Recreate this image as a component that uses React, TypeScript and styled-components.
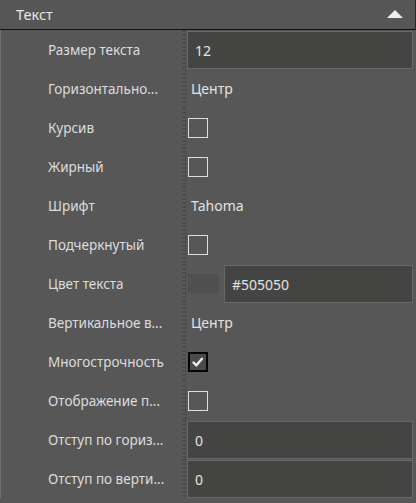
import React from "react";
import styled, { createGlobalStyle } from "styled-components";

const Global = createGlobalStyle`
  html, body { margin: 0; padding: 0; background: #575757; }
  body { font-family: "Noto Sans", "Segoe UI", sans-serif; }
`;

const Panel = styled.div`
  width: 416px;
  height: 503px;
  background: #575757;
  display: flex;
  flex-direction: column;
  overflow: hidden;
`;

const Header = styled.div`
  height: 30px;
  flex: none;
  display: flex;
  align-items: center;
  justify-content: space-between;
  padding: 0 12px 1px 16px;
  box-sizing: border-box;
  border-bottom: 1px solid #111;
  border-right: 1px solid #2a2a2a;
  background: #565656;
  color: #e6e6e6;
  font-size: 14.5px;
`;

const Body = styled.div`
  border-left: 1px solid #6e6e6e;
  display: flex;
  flex-direction: column;
  height: 468px;
  box-sizing: border-box;
`;

const Row = styled.div`
  height: 39px;
  display: grid;
  grid-template-columns: 181px 4px 1fr;
  align-items: stretch;
`;

const Label = styled.div`
  display: flex;
  align-items: center;
  padding: 0 4px 0 47px;
  color: #dcdcdc;
  font-size: 13.5px;
  white-space: nowrap;
  min-width: 0;
`;

const Splitter = styled.div`
  background:
    repeating-linear-gradient(
      to bottom,
      #4a4a4a 0px,
      #4a4a4a 2px,
      #606060 2px,
      #606060 4px
    );
  border-left: 1px solid #505050;
  border-right: 1px solid #4c4c4c;
  width: 2px;
`;

const Value = styled.div<{ $pad?: number }>`
  display: flex;
  align-items: center;
  gap: 5px;
  padding-left: ${(p) => p.$pad ?? 1}px;
  padding-right: 3px;
  color: #e2e2e2;
  font-size: 14px;
  min-width: 0;
`;

const Input = styled.div`
  flex: 1;
  align-self: flex-start;
  margin-top: 1px;
  height: 38px;
  box-sizing: border-box;
  background: #444442;
  border: 1px solid #686868;
  display: flex;
  align-items: center;
  padding-left: 7px;
  color: #e4e4e4;
  font-size: 14px;
`;

const Check = styled.div<{ $on?: boolean }>`
  width: 20px;
  height: 20px;
  box-sizing: border-box;
  border: ${(p) => (p.$on ? "2px solid #050505" : "1px solid #dedede")};
  background: ${(p) => (p.$on ? "#4a4a4a" : "transparent")};
  display: flex;
  align-items: center;
  justify-content: center;
`;

const Swatch = styled.div<{ $color: string }>`
  width: 31px;
  height: 19px;
  flex: none;
  background: ${(p) => p.$color};
`;

const Tick = () => (
  <svg width="14" height="12" viewBox="0 0 14 12">
    <path
      d="M2.5 6.5 L5.3 9.4 L11 2.8"
      fill="none"
      stroke="#ececec"
      strokeWidth="2.4"
      strokeLinecap="round"
      strokeLinejoin="round"
    />
  </svg>
);

const Caret = () => (
  <svg width="16" height="8" viewBox="0 0 16 8">
    <path d="M8 0 L16 8 L0 8 Z" fill="#ededed" />
  </svg>
);

type Field =
  | { label: string; kind: "input"; value: string }
  | { label: string; kind: "text"; value: string }
  | { label: string; kind: "check"; on?: boolean }
  | { label: string; kind: "color"; value: string };

const fields: Field[] = [
  { label: "Размер текста", kind: "input", value: "12" },
  { label: "Горизонтально...", kind: "text", value: "Центр" },
  { label: "Курсив", kind: "check" },
  { label: "Жирный", kind: "check" },
  { label: "Шрифт", kind: "text", value: "Tahoma" },
  { label: "Подчеркнутый", kind: "check" },
  { label: "Цвет текста", kind: "color", value: "#505050" },
  { label: "Вертикальное в...", kind: "text", value: "Центр" },
  { label: "Многострочность", kind: "check", on: true },
  { label: "Отображение п...", kind: "check" },
  { label: "Отступ по гориз...", kind: "input", value: "0" },
  { label: "Отступ по верти...", kind: "input", value: "0" },
];

function renderValue(f: Field) {
  switch (f.kind) {
    case "input":
      return (
        <Value>
          <Input>{f.value}</Input>
        </Value>
      );
    case "text":
      return <Value $pad={5}>{f.value}</Value>;
    case "check":
      return (
        <Value $pad={2}>
          <Check $on={f.on}>{f.on && <Tick />}</Check>
        </Value>
      );
    case "color":
      return (
        <Value $pad={2}>
          <Swatch $color="#505050" />
          <Input>{f.value}</Input>
        </Value>
      );
  }
}

export default function App() {
  return (
    <>
      <Global />
      <Panel>
        <Header>
          <span>Текст</span>
          <Caret />
        </Header>
        <Body>
          {fields.map((f) => (
            <Row key={f.label}>
              <Label>{f.label}</Label>
              <Splitter />
              {renderValue(f)}
            </Row>
          ))}
        </Body>
      </Panel>
    </>
  );
}
